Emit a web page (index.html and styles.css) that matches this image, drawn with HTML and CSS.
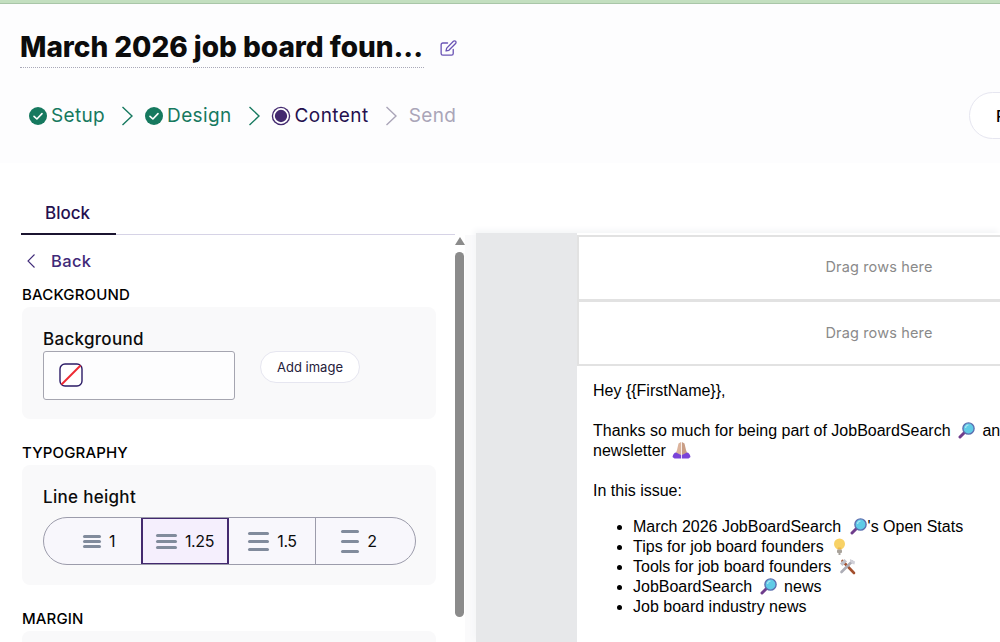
FILE: index.html
```html
<!DOCTYPE html>
<html lang="en">
<head>
<meta charset="utf-8">
<title>March 2026 job board founders</title>
<link rel="stylesheet" href="styles.css">
</head>
<body>
<svg class="defs" width="0" height="0" aria-hidden="true">
  <defs>
    <symbol id="mag" viewBox="0 0 17 17">
      <path d="M6.500 10.500 2 15" stroke="#6f3d8c" stroke-width="3" stroke-linecap="round"/>
      <circle cx="10.500" cy="6.500" r="5.600" fill="#5fcbe6" stroke="#5b6fb0" stroke-width="1.400"/>
      <path d="M7.500 6a3.200 3.200 0 0 1 3-3" fill="none" stroke="#a8e6f3" stroke-width="1.200"/>
    </symbol>
    <symbol id="check" viewBox="0 0 18 18">
      <circle cx="9" cy="9" r="9" fill="#16795f"/>
      <path d="M5 9.300 7.900 12 13 6.600" fill="none" stroke="#fff" stroke-width="1.600" stroke-linecap="round" stroke-linejoin="round"/>
    </symbol>
  </defs>
</svg>
<div class="topline"></div>
<header class="header">
  <div class="title-row">
    <h1 class="title">March 2026 job board foun...</h1>
    <svg class="edit" viewBox="0 0 18 18" width="17" height="17" fill="none" stroke="#6b55b5" stroke-width="1.400" stroke-linecap="round" stroke-linejoin="round">
      <path d="M8 3.200H3a1.800 1.800 0 0 0-1.800 1.800v9.200A1.800 1.800 0 0 0 3 16h9.200a1.800 1.800 0 0 0 1.800-1.800V10"/>
      <path d="M14.200 1.400a1.600 1.600 0 0 1 2.300 2.300L9.400 10.900l-3 .7.700-3z"/>
    </svg>
  </div>
  <div class="steps-row">
    <nav class="steps">
      <span class="step done"><svg class="step-icon"><use href="#check"/></svg>Setup</span>
      <svg class="chev" viewBox="0 0 12 20"><path d="M1.500 1 11 10 1.500 19" fill="none" stroke="#16795f" stroke-width="1.400"/></svg>
      <span class="step done"><svg class="step-icon"><use href="#check"/></svg>Design</span>
      <svg class="chev" viewBox="0 0 12 20"><path d="M1.500 1 11 10 1.500 19" fill="none" stroke="#16795f" stroke-width="1.400"/></svg>
      <span class="step current"><span class="dot"></span>Content</span>
      <svg class="chev" viewBox="0 0 12 20"><path d="M1.500 1 11 10 1.500 19" fill="none" stroke="#aaa5b8" stroke-width="1.400"/></svg>
      <span class="step todo">Send</span>
    </nav>
    <button class="preview">Preview</button>
  </div>
</header>
<main class="main">
  <aside class="side">
    <div class="tabs"><span class="tab">Block</span></div>
    <div class="side-body">
      <div class="panel">
        <a class="back"><svg viewBox="0 0 10 16" width="10" height="16"><path d="M8.500 1.500 2 8l6.500 6.500" fill="none" stroke="#3f2a78" stroke-width="1.100"/></svg>Back</a>
        <h2 class="sec first">BACKGROUND</h2>
        <section class="card bg-card">
          <div class="label">Background</div>
          <div class="bg-row">
            <div class="colorbox"><svg viewBox="0 0 24 24" width="24" height="24"><rect x="1" y="1" width="22" height="22" rx="5" fill="#fff" stroke="#2b1b66" stroke-width="1.400"/><path d="M2.500 21.500 21.500 2.500" stroke="#ee2a33" stroke-width="2"/></svg></div>
            <button class="addimg">Add image</button>
          </div>
        </section>
        <h2 class="sec">TYPOGRAPHY</h2>
        <section class="card lh-card">
          <div class="label">Line height</div>
          <div class="seg">
            <div class="seg-item s1"><span class="lines l1"><i></i><i></i><i></i></span>1</div>
            <div class="seg-item s2 active"><span class="lines l2"><i></i><i></i><i></i></span>1.25</div>
            <div class="seg-item s3"><span class="lines l3"><i></i><i></i><i></i></span>1.5</div>
            <div class="seg-item s4"><span class="lines l4"><i></i><i></i><i></i></span>2</div>
          </div>
        </section>
        <h2 class="sec">MARGIN</h2>
        <section class="card margin-card"></section>
      </div>
      <div class="scroll"><span class="arrow"></span><span class="thumb"></span></div>
    </div>
  </aside>
  <section class="canvas">
    <div class="sheet">
      <div class="drop">Drag rows here</div>
      <div class="drop second">Drag rows here</div>
      <div class="mail">
        <p>Hey {{FirstName}},</p>
        <p>Thanks so much for being part of JobBoardSearch <svg class="emoji"><use href="#mag"/></svg> and welcome to this month's<br>newsletter <svg class="emoji hands" viewBox="0 0 18 18"><path d="M8.600 1 6 2.500 4.500 9 3 13l5.600 1z" fill="#dcb49c"/><path d="M9.400 1 12 2.500 13.500 9 15 13l-5.600 1z" fill="#c99e86"/><path d="M0 16c.5-3 2-4.500 3.500-4.500L8.600 14v3.500H2zM18 16c-.5-3-2-4.500-3.500-4.500L9.400 14v3.500H16z" fill="#7a44d8"/></svg></p>
        <p class="intro">In this issue:</p>
        <ul>
          <li>March 2026 JobBoardSearch <svg class="emoji tight"><use href="#mag"/></svg>'s Open Stats</li>
          <li>Tips for job board founders <svg class="emoji" viewBox="0 0 17 17"><circle cx="8.500" cy="6" r="5.500" fill="#f8d266"/><path d="M6.500 11.500h4l-.5-2h-3z" fill="#eeb84a"/><rect x="6" y="11.500" width="5" height="3.500" rx="1" fill="#a8a29a"/><path d="M7.500 16h2" stroke="#8a847c" stroke-width="1.500"/></svg></li>
          <li>Tools for job board founders <svg class="emoji" viewBox="0 0 17 17"><path d="M3.500 3 15 15" stroke="#a34f2d" stroke-width="2.600" stroke-linecap="round"/><path d="M13 3.500 2.500 14" stroke="#adadb6" stroke-width="2.600" stroke-linecap="round"/><path d="M1 5.500 5.500 1l2.500 2.500-4.500 4.500z" fill="#c0c0c8"/><path d="M11 1l5 2.500-.5 3-2-.5-2.500-2.500z" fill="#d0d0d8"/></svg></li>
          <li>JobBoardSearch <svg class="emoji"><use href="#mag"/></svg> news</li>
          <li>Job board industry news</li>
        </ul>
      </div>
    </div>
  </section>
</main>
</body>
</html>
```
FILE: styles.css
```css
* { box-sizing: border-box; }
html, body { margin: 0; height: 642px; overflow: hidden; background: #fff; }
body { font-family: "Inter", "Liberation Sans", sans-serif; color: #000; width: 1000px; }
.defs { position: absolute; }
.topline { height: 4px; background: #c3dfc0; border-bottom: 1px solid #a9c6a8; }

.header { height: 159px; background: #fdfdfe; padding: 26px 0 0 20px; overflow: hidden; }
.title-row { display: flex; align-items: center; gap: 16px; height: 38px; }
.title { margin: 0; width: 404px; height: 38px; font: 800 28px/35px "Inter", sans-serif; letter-spacing: -.03px; color: #0c0c0c; white-space: nowrap; border-bottom: 1px dotted #a9a9b8; }
.edit { flex: none; margin-top: -2px; }
.steps-row { display: flex; justify-content: space-between; margin-top: 24px; height: 47px; }
.steps { display: flex; align-items: center; padding-left: 9px; }
.step { display: flex; align-items: center; gap: 4px; font-size: 19px; letter-spacing: .35px; white-space: nowrap; }
.step-icon { width: 18px; height: 18px; }
.done { color: #16795f; }
.current { color: #25104f; letter-spacing: .45px; }
.todo { color: #aaa5b8; }
.dot { width: 18px; height: 18px; margin-right: 1px; border-radius: 50%; background: #43296f; border: 2px solid #fff; box-shadow: 0 0 0 1.500px #43296f; transform: scale(.88); }
.chev { width: 12px; height: 20px; margin: 0 12px 0 16px; }
.preview { width: 120px; height: 47px; flex: none; margin-right: -89px; border: 1px solid #e6e6f0; border-radius: 24px; background: #fff; font: 500 16px "Inter", sans-serif; text-align: left; padding-left: 26px; }

.main { display: flex; height: 479px; }
.side { width: 476px; flex: none; padding-left: 21px; padding-top: 31px; }
.tabs { width: 434px; height: 41px; border-bottom: 1px solid #d6d3e6; }
.tab { display: block; width: 95px; height: 41px; padding: 9px 0 0 24px; font-size: 17px; font-weight: 500; color: #25104f; border-bottom: 2px solid #1b1430; }
.side-body { display: flex; width: 455px; background: linear-gradient(to right, #fff 444px, #fafafb 444px); }
.panel { width: 434px; padding-left: 1px; padding-right: 19px; height: 407px; overflow: hidden; }
.back { display: flex; align-items: center; gap: 15px; padding: 13px 0 0 4px; height: 39px; font-size: 16.500px; letter-spacing: .35px; font-weight: 500; color: #3f2a78; }
.sec { margin: 25px 0 3px; font-size: 15px; line-height: 18px; font-weight: 500; color: #000; letter-spacing: .15px; }
.sec.first { margin-top: 12px; }
.card { background: #f9f9fa; border-radius: 8px; padding: 22px 20px 22px 21px; }
.bg-card { height: 112px; }
.lh-card { height: 120px; }
.margin-card { height: 40px; }
.label { font-size: 17px; line-height: 20px; font-weight: 500; letter-spacing: .3px; color: #0c0c0c; }
.bg-row { display: flex; align-items: center; gap: 25px; margin-top: 2px; }
.colorbox { width: 192px; height: 49px; border: 1px solid #a5a5b0; border-radius: 3px; background: #fdfdfe; padding: 11px 0 0 15px; }
.colorbox svg { display: block; }
.addimg { width: 100px; height: 32px; border: 1px solid #e6e6f0; border-radius: 16px; background: #fff; font: 400 13px "Inter", sans-serif; color: #25203a; padding: 0; margin-top: -17px; }
.seg { display: flex; width: 373px; height: 48px; margin-top: 10px; border: 1px solid #9c9cab; border-radius: 24px; background: #f8f7fc; overflow: hidden; }
.seg-item { display: flex; align-items: center; justify-content: center; gap: 8px; font-size: 16px; letter-spacing: -.4px; color: #0c0c0c; }
.s1 { width: 97px; padding-left: 39px; justify-content: flex-start; }
.s2 { width: 88px; }
.s3 { width: 87px; padding-left: 1px; border-right: 1px solid #9c9cab; }
.s4 { flex: 1; padding-right: 13px; }
.active { background: #f5effd; border: 2px solid #43296f; margin: -1px 0; height: 48px; }
.lines { display: flex; flex-direction: column; }
.lines i { display: block; height: 3px; border-radius: 2px; background: #818b9c; }
.l1 { width: 18px; gap: 2px; }
.l2 { width: 21px; gap: 3px; }
.l3 { width: 21px; gap: 5px; }
.l4 { width: 18px; gap: 7px; }

.scroll { width: 9px; position: relative; display: flex; flex-direction: column; align-items: center; padding-top: 2px; }
.arrow { width: 0; height: 0; border-left: 5px solid transparent; border-right: 5px solid transparent; border-bottom: 8px solid #8b8b8b; }
.thumb { width: 9px; height: 365px; margin-top: 7px; border-radius: 5px; background: #8b8b8b; }

.canvas { flex: 1; margin-top: 70px; background: #e7e8ea; padding-left: 101px; overflow: hidden; box-shadow: -2px -3px 6px #f4f5f7; }
.sheet { width: 600px; height: 100%; background: #fff; padding-top: 2px; }
.drop { height: 66px; width: 600px; border: solid #e2e2e2; border-width: 2px 0 2px 2px; display: flex; align-items: center; justify-content: center; font-size: 14.500px; letter-spacing: .15px; color: #8a8a8a; padding: 0 0 3px 2px; }
.drop.second { height: 65px; border-top-width: 1px; padding-bottom: 1px; }
.mail { padding: 15px 0 0 16px; font: 16px/20px "Liberation Sans", Arial, sans-serif; color: #000; white-space: nowrap; }
.mail p { margin: 0 0 20px; }
.mail p.intro { margin-bottom: 16px; }
.mail ul { margin: 0; padding-left: 40px; }
.emoji { width: 17px; height: 17px; vertical-align: -3px; margin: 0 3px; }
.emoji.tight { margin: 0 1px 0 4px; }
.emoji.hands { width: 19px; height: 18px; margin-left: 2px; }
```
